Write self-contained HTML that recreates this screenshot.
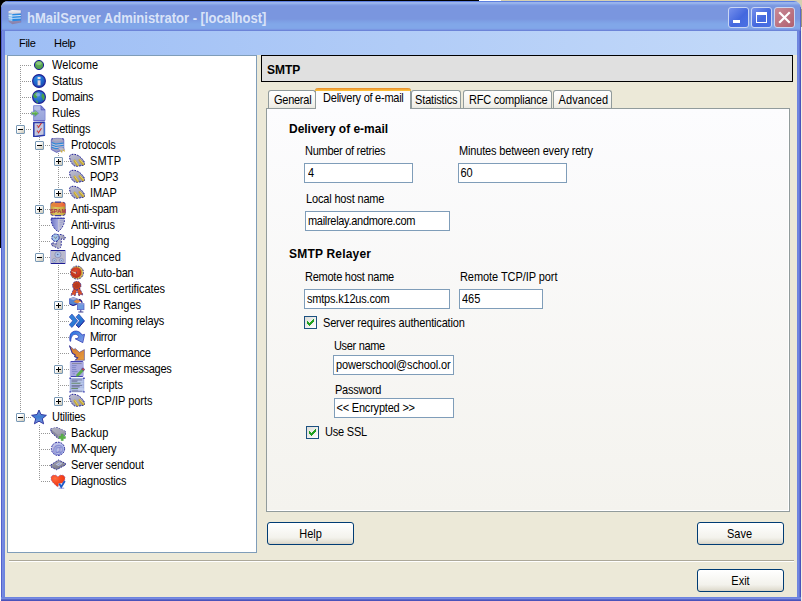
<!DOCTYPE html>
<html lang="en"><head><meta charset="utf-8"><title>hMailServer Administrator - [localhost]</title>
<style>
html,body{margin:0;padding:0}
body{width:802px;height:601px;overflow:hidden;position:relative;background:#000;font:11px "Liberation Sans",sans-serif;color:#000}
div,span,i,svg{position:absolute;box-sizing:border-box;display:block}
#win{left:1px;top:1px;width:800px;height:600px;background:#ece9d8;border-radius:7px 7px 0 0;overflow:hidden}
#tb{left:0;top:0;width:800px;height:30px;background:linear-gradient(to bottom,#5c7fe0 0px,#5c7fe0 1px,#9ab4ec 1px,#9ab4ec 2px,#96b1eb 2px,#96b1eb 3px,#86a4e7 3px,#86a4e7 4px,#7d9ae2 4px,#7d9ae2 5px,#7a96df 5px,#7a96df 18px,#7d9ee4 20px,#81a7e9 23px,#81a7e9 27px,#80a4e8 27px,#80a4e8 28px,#7b98e3 28px,#7b98e3 29px,#6c84d8 29px,#6c84d8 30px)}
#bl{left:0;top:30px;width:4px;height:570px;background:linear-gradient(to right,#5262ca 0,#5262ca 1px,#7a8ce2 1px,#7a8ce2 2px,#7088e0 2px,#7088e0 3px,#6c84e0 3px)}
#br{left:796px;top:30px;width:4px;height:570px;background:linear-gradient(to left,#4a52ba 0,#4a52ba 1px,#6272d2 1px,#6272d2 2px,#7088e0 2px,#7088e0 3px,#6f84de 3px)}
#bb{left:0;top:596px;width:800px;height:4px;background:linear-gradient(to bottom,#6c84e0 0,#6c84e0 1px,#7a8ce0 1px,#7a8ce0 2px,#5a68c8 2px,#5a68c8 3px,#4a52ba 3px)}
#title{left:26px;top:2px;height:30px;font:bold 13px/30px "Liberation Sans",sans-serif;color:#d9e3f8;white-space:pre;letter-spacing:0;transform:scaleY(1.16);transform-origin:0 50%}
#menu{left:4px;top:30px;width:792px;height:24px;background:linear-gradient(to right,#9ebef5,#c4daf9)}
#menu span{top:0;line-height:24px;height:24px;white-space:pre;letter-spacing:-.3px}
.cb{width:21px;height:21px;top:6px;border-radius:3px;border:1px solid #c9d6f3}
#treebox{left:7px;top:55px;width:250px;height:498px;background:#fff;border:1px solid #7f9db9}
.tt{height:16px;line-height:16px;white-space:pre}
.ic{width:16px;height:16px}
.ic svg{left:0;top:0}
.ex{width:9px;height:9px;border:1px solid #7898b5;background:linear-gradient(135deg,#fff 30%,#c9c5b4);border-radius:1px}
.ex i.h{left:1px;top:3px;width:5px;height:1px;background:#000}
.ex i.v{left:3px;top:1px;width:1px;height:5px;background:#000}
svg.tl{left:7px;top:55px}
svg.tl line{stroke:#969696;stroke-width:1;stroke-dasharray:1 1;shape-rendering:crispEdges}
#hdr{left:261px;top:55px;width:532px;height:27px;background:#e0e0e0;border:1px solid #000}
#hdr span{left:5px;top:1px;line-height:25px;font:bold 12px/26px "Liberation Sans",sans-serif;white-space:pre}
.tab{top:90px;height:19px;border:1px solid #919b9c;border-bottom:none;border-radius:3px 3px 0 0;background:linear-gradient(to bottom,#fff,#f1f0ea 80%,#e6e5dc);line-height:19px;text-align:left;white-space:pre}
.tab.sel{top:88px;height:21px;background:#fcfcfe;border-top:none;z-index:3;line-height:21px}
.tab.sel:before{content:"";position:absolute;left:-1px;right:-1px;top:0;height:3px;border-radius:3px 3px 0 0;background:linear-gradient(to bottom,#e68b2c,#ffc73c)}
#panel{left:266px;top:108px;width:524px;height:404px;border:1px solid #919b9c;background:linear-gradient(to bottom,#fcfcfe,#f4f3ee);box-shadow:inset -1px -1px 0 #fff}
.lb{height:14px;line-height:14px;white-space:pre}
.hd{height:16px;line-height:16px;font:bold 12px/16px "Liberation Sans",sans-serif;white-space:pre}
.in{height:20px;border:1px solid #7f9db9;background:#fff;line-height:18px;padding-left:3px;white-space:pre;overflow:hidden}
.ck{width:13px;height:13px;border:1px solid #1c5180;background:linear-gradient(135deg,#dcdcd7,#fff)}
.ck svg{left:0;top:0}
.btn{height:23px;border:1px solid #003c74;border-radius:3px;background:linear-gradient(to bottom,#fff,#f3f2ec 70%,#e2dfd3 92%,#d6d0c5);line-height:22px;text-align:center}
.sep{left:9px;height:1px}
#tree{left:0;top:0;width:0;height:0}
.tt,.lb{transform:scaleY(1.125);transform-origin:0 calc(50% + 3.800px)}
span.t{position:relative;display:inline-block;transform:scaleY(1.125);transform-origin:0 calc(50% + 3.800px)}

</style></head>
<body>
<div style="left:479px;top:0;width:22px;height:1px;background:#fff"></div><div style="left:501px;top:0;width:301px;height:9px;background:#d6cfb0"></div><div style="left:801px;top:9px;width:1px;height:18px;background:#9c9678"></div><div style="left:801px;top:27px;width:1px;height:574px;background:#f4f0e2"></div><div style="left:0;top:248px;width:1px;height:353px;background:#fff"></div>
<div id="win">
<div id="tb"></div>
<div id="bl"></div><div id="br"></div><i style="left:0;top:6px;width:1px;height:24px;background:#6176d6"></i><i style="left:799px;top:6px;width:1px;height:24px;background:#5a68cc"></i><div id="bb"></div>
<svg id="appic" width="16" height="16" viewBox="0 0 16 16" style="left:6px;top:8px"><defs><linearGradient id="ta" x1="0" y1="0" x2="0" y2="1"><stop offset="0" stop-color="#f6f6fa"/><stop offset="1" stop-color="#cfcedb"/></linearGradient><linearGradient id="tb2" x1="0" y1="0" x2="0" y2="1"><stop offset="0" stop-color="#b2aace"/><stop offset="1" stop-color="#8880aa"/></linearGradient></defs><path d="M1.600 2.300L5 .900l9 .500V13.400L5.400 15.200 1.600 12.800z" fill="url(#tb2)"/><path d="M1.600 2.300L5 .900l9 .500V4.600L5.400 5 1.600 4.300z" fill="url(#ta)"/><path d="M1.600 4.300L5.400 5 14 4.600V11.600L5.400 12.200 1.600 11.300z" fill="#2a8ae2"/><path d="M5.400 6.500L14 6.100v.900L5.400 7.400zM5.400 8.900L14 8.500v.900L5.400 9.800z" fill="#dde6f8"/><path d="M1.600 4.300L5.400 5v7.200l-3.800-.900z" fill="#fff" opacity=".5"/><path d="M1.600 5.800l3.800.700v.900l-3.800-.700zM1.600 8.200l3.800.700v.900l-3.800-.700z" fill="#f4f8ff" opacity=".8"/><path d="M14 1.400v12" stroke="#6a7ac8" stroke-width=".6" opacity=".7"/></svg>
<div id="title">hMailServer Administrator - [localhost]</div>
<div class="cb" style="left:727px;background:linear-gradient(135deg,#7690ec,#4468de 55%,#4a72e4)"><i style="left:4px;top:12px;width:7px;height:3px;background:#fff"></i></div>
<div class="cb" style="left:750px;background:linear-gradient(135deg,#7690ec,#4468de 55%,#4a72e4)"><i style="left:4px;top:4px;width:11px;height:11px;border:1px solid #fff;border-top-width:3px"></i></div>
<div class="cb" style="left:773px;background:linear-gradient(135deg,#c98a96,#b06070)"><svg width="19" height="19" viewBox="0 0 19 19" style="left:0;top:0"><path d="M5 5L14 14M14 5L5 14" stroke="#fff" stroke-width="2.2" stroke-linecap="square"/></svg></div>
<div id="menu"><span style="left:14px">File</span><span style="left:49px">Help</span></div>
</div>
<div id="treebox"></div>
<div id="tree">
<svg class="tl" width="250" height="498" viewBox="7 55 250 498" ><line x1="20.5" y1="65" x2="20.5" y2="417"/><line x1="39.5" y1="137" x2="39.5" y2="257"/><line x1="58.5" y1="153" x2="58.5" y2="193"/><line x1="58.5" y1="265" x2="58.5" y2="401"/><line x1="39.5" y1="425" x2="39.5" y2="481"/><line x1="22" y1="65.5" x2="31" y2="65.5"/><line x1="22" y1="81.5" x2="31" y2="81.5"/><line x1="22" y1="97.5" x2="31" y2="97.5"/><line x1="22" y1="113.5" x2="31" y2="113.5"/><line x1="26" y1="129.5" x2="31" y2="129.5"/><line x1="45" y1="145.5" x2="50" y2="145.5"/><line x1="64" y1="161.5" x2="69" y2="161.5"/><line x1="60" y1="177.5" x2="69" y2="177.5"/><line x1="64" y1="193.5" x2="69" y2="193.5"/><line x1="45" y1="209.5" x2="50" y2="209.5"/><line x1="41" y1="225.5" x2="50" y2="225.5"/><line x1="41" y1="241.5" x2="50" y2="241.5"/><line x1="45" y1="257.5" x2="50" y2="257.5"/><line x1="60" y1="273.5" x2="69" y2="273.5"/><line x1="60" y1="289.5" x2="69" y2="289.5"/><line x1="64" y1="305.5" x2="69" y2="305.5"/><line x1="60" y1="321.5" x2="69" y2="321.5"/><line x1="60" y1="337.5" x2="69" y2="337.5"/><line x1="60" y1="353.5" x2="69" y2="353.5"/><line x1="64" y1="369.5" x2="69" y2="369.5"/><line x1="60" y1="385.5" x2="69" y2="385.5"/><line x1="64" y1="401.5" x2="69" y2="401.5"/><line x1="26" y1="417.5" x2="31" y2="417.5"/><line x1="41" y1="433.5" x2="50" y2="433.5"/><line x1="41" y1="449.5" x2="50" y2="449.5"/><line x1="41" y1="465.5" x2="50" y2="465.5"/><line x1="41" y1="481.5" x2="50" y2="481.5"/></svg>
<div class="ic" style="left:31px;top:57px"><svg width="16" height="16" viewBox="0 0 16 16"><defs><radialGradient id="gw" cx=".5" cy=".4" r=".7"><stop offset="0" stop-color="#6ab45e"/><stop offset="1" stop-color="#3f8f3f"/></radialGradient></defs><circle cx="8" cy="8" r="4.600" fill="url(#gw)" stroke="#1e1e94" stroke-width="1"/><ellipse cx="8" cy="6.300" rx="2.900" ry="1.700" fill="#98cc88" opacity=".75"/></svg></div><div class="tt" style="left:52px;top:57px;letter-spacing:0.06px">Welcome</div>
<div class="ic" style="left:31px;top:73px"><svg width="16" height="16" viewBox="0 0 16 16"><defs><radialGradient id="gs" cx=".4" cy=".3" r=".8"><stop offset="0" stop-color="#2a8ee4"/><stop offset=".55" stop-color="#1e62c8"/><stop offset="1" stop-color="#1a3aa0"/></radialGradient></defs><circle cx="8" cy="8" r="6.400" fill="url(#gs)" stroke="#1e1e94" stroke-width="1.100"/><rect x="6.600" y="3.900" width="2.900" height="2.200" fill="#ecdfe6"/><rect x="6.600" y="7.300" width="2.900" height="5" fill="#e6d6da"/></svg></div><div class="tt" style="left:52px;top:73px;letter-spacing:-0.09px">Status</div>
<div class="ic" style="left:31px;top:89px"><svg width="16" height="16" viewBox="0 0 16 16"><defs><radialGradient id="gd" cx=".42" cy=".35" r=".8"><stop offset="0" stop-color="#4a8ee0"/><stop offset=".6" stop-color="#1e68c4"/><stop offset="1" stop-color="#163c98"/></radialGradient></defs><circle cx="8" cy="8" r="6.400" fill="url(#gd)" stroke="#1e1e94" stroke-width="1.100"/><path d="M2.300 6l1.500-2 2-.8.900 1.200-1.200 1 1 1.600-1.200 2.200-1.800-.4-1.200-1.400zM4.600 11.400l1.600.2 1 1.800-1 .6zM11.400 4.600l1.600 1 .8 2.600-.6 2.600-1.200.8-.6-2.400-1-1.600.4-2z" fill="#4aa246"/><ellipse cx="6.800" cy="5.600" rx="2.400" ry="1.900" fill="#a4bef2" opacity=".6"/></svg></div><div class="tt" style="left:52px;top:89px;letter-spacing:-0.3px">Domains</div>
<div class="ic" style="left:31px;top:105px"><svg width="16" height="16" viewBox="0 0 16 16"><defs><linearGradient id="gr" x1="0" y1="0" x2="0" y2="1"><stop offset="0" stop-color="#aab4e2"/><stop offset="1" stop-color="#98a4da"/></linearGradient></defs><path d="M2.600.700h7.400l4 4.200v10.600h-11.400z" fill="url(#gr)" stroke="#868ed8" stroke-width="1"/><path d="M3.400 1.400h6.400v3.600h-6.400z" fill="#b6bfe6"/><path d="M10 .700v4.200h4z" fill="#8088d4" stroke="#4a50c0" stroke-width=".7"/><path d="M2.600 15.500h11.400" stroke="#6a6ad0" stroke-width="1"/><path d="M.400 6.900h3.200V4.900l4.200 3.400-4.200 3.500V9.800H.400z" fill="#5eae4c" stroke="#6c7cd0" stroke-width=".5"/><path d="M1 7.500h3.200V6.400l2.300 1.900" fill="none" stroke="#9ad088" stroke-width=".7"/></svg></div><div class="tt" style="left:52px;top:105px;letter-spacing:-0.03px">Rules</div>
<div class="ex" style="left:16px;top:125px"><i class="h"></i></div><div class="ic" style="left:31px;top:121px"><svg width="16" height="16" viewBox="0 0 16 16"><path d="M2.800 1.600l10.600-.4v13l-10.600 1.600z" fill="#c5c8de" stroke="#2a38aa" stroke-width="1.500" stroke-linejoin="round"/><path d="M13.500 1.400v12.600" stroke="#4a78d8" stroke-width=".9"/><path d="M6 4.200l1.500 2.100 3-4.400M6 9.600l1.500 2.100 3-4.400" fill="none" stroke="#cc3434" stroke-width="1.100"/><rect x="5.600" y="5.400" width="1.400" height="1.400" fill="#a4a8cc"/><rect x="5.600" y="10.800" width="1.400" height="1.400" fill="#a4a8cc"/></svg></div><div class="tt" style="left:52px;top:121px;letter-spacing:-0.18px">Settings</div>
<div class="ex" style="left:35px;top:141px"><i class="h"></i></div><div class="ic" style="left:50px;top:137px"><svg width="16" height="16" viewBox="0 0 16 16"><path d="M1.300 2.800C3 .900 11.500.900 13.800 2.600v9.800L6.600 15.400 1.300 12.600z" fill="#9c9ec4" stroke="#4a4ab8" stroke-width=".7"/><path d="M1.600 2.700C3.500 1 11.500 1 13.500 2.700 11.500 4.800 4 5 1.600 2.700z" fill="#ababc2"/><path d="M1.500 2.200l1.200-.6M12.400 1.600l1.200.7" stroke="#1e1e94" stroke-width="1.100"/><path d="M1.600 5.600l4.200 1.500 7.800-1M1.600 7.900l4.200 1.500 7.800-1M1.600 10.200l4.200 1.500 7.800-1" fill="none" stroke="#2c8ada" stroke-width="1.250"/><path d="M1.600 6.750l4.200 1.500 7.800-1M1.600 9.050l4.200 1.500 7.800-1" fill="none" stroke="#c4c6da" stroke-width=".9"/><path d="M8.200 11.400c1-1.600 4-2 5.400-.6l1 2.200-3.600 1.800z" fill="#b8b8cc" stroke="#6a6ab8" stroke-width=".4"/><path d="M10.600 13.400l1.600 2M12.800 12.600l2 1.800" stroke="#cfb238" stroke-width="1.200"/></svg></div><div class="tt" style="left:71px;top:137px;letter-spacing:-0.14px">Protocols</div>
<div class="ex" style="left:54px;top:157px"><i class="h"></i><i class="v"></i></div><div class="ic" style="left:69px;top:153px"><svg width="16" height="16" viewBox="0 0 16 16"><defs><linearGradient id="gp6" x1="0" y1="0" x2=".6" y2="1"><stop offset="0" stop-color="#c0c0d4"/><stop offset="1" stop-color="#9496ae"/></linearGradient></defs><path d="M.600 3.300C.800 1.800 3 1 5 1.300c2.800.3 5.400 1.500 7.600 4 1.400 1.500 3.400 4.200 3.200 5.600-.3 1.400-2 1.700-3.300 1.500-1 .5-4.400 1.200-6.700.6C3 12 .300 6.400.600 3.300z" fill="url(#gp6)" stroke="#1e1e94" stroke-width="1" stroke-dasharray="1.700 1.100"/><path d="M5.700 7.800l3 4.300M10.700 7.200l3.600 3.900" stroke="#c4a634" stroke-width="2.300" stroke-linecap="round"/><path d="M5.900 7.400l2.900 4.100M11 6.900l3.300 3.600" stroke="#ecd874" stroke-width=".8" stroke-linecap="round"/></svg></div><div class="tt" style="left:90px;top:153px;letter-spacing:0.15px">SMTP</div>
<div class="ic" style="left:69px;top:169px"><svg width="16" height="16" viewBox="0 0 16 16"><defs><linearGradient id="gp7" x1="0" y1="0" x2=".6" y2="1"><stop offset="0" stop-color="#c0c0d4"/><stop offset="1" stop-color="#9496ae"/></linearGradient></defs><path d="M.600 3.300C.800 1.800 3 1 5 1.300c2.800.3 5.400 1.500 7.600 4 1.400 1.500 3.400 4.200 3.200 5.600-.3 1.400-2 1.700-3.300 1.500-1 .5-4.400 1.200-6.700.6C3 12 .300 6.400.600 3.300z" fill="url(#gp7)" stroke="#1e1e94" stroke-width="1" stroke-dasharray="1.700 1.100"/><path d="M5.700 7.800l3 4.300M10.700 7.200l3.600 3.900" stroke="#c4a634" stroke-width="2.300" stroke-linecap="round"/><path d="M5.900 7.400l2.900 4.100M11 6.900l3.300 3.600" stroke="#ecd874" stroke-width=".8" stroke-linecap="round"/></svg></div><div class="tt" style="left:90px;top:169px;letter-spacing:-0.29px">POP3</div>
<div class="ex" style="left:54px;top:189px"><i class="h"></i><i class="v"></i></div><div class="ic" style="left:69px;top:185px"><svg width="16" height="16" viewBox="0 0 16 16"><defs><linearGradient id="gp8" x1="0" y1="0" x2=".6" y2="1"><stop offset="0" stop-color="#c0c0d4"/><stop offset="1" stop-color="#9496ae"/></linearGradient></defs><path d="M.600 3.300C.800 1.800 3 1 5 1.300c2.800.3 5.400 1.500 7.600 4 1.400 1.500 3.400 4.200 3.200 5.600-.3 1.400-2 1.700-3.300 1.500-1 .5-4.400 1.200-6.700.6C3 12 .300 6.400.600 3.300z" fill="url(#gp8)" stroke="#1e1e94" stroke-width="1" stroke-dasharray="1.700 1.100"/><path d="M5.700 7.800l3 4.300M10.700 7.200l3.600 3.900" stroke="#c4a634" stroke-width="2.300" stroke-linecap="round"/><path d="M5.900 7.400l2.900 4.100M11 6.900l3.300 3.600" stroke="#ecd874" stroke-width=".8" stroke-linecap="round"/></svg></div><div class="tt" style="left:90px;top:185px;letter-spacing:-0.05px">IMAP</div>
<div class="ex" style="left:35px;top:205px"><i class="h"></i><i class="v"></i></div><div class="ic" style="left:50px;top:201px"><svg width="16" height="16" viewBox="0 0 16 16"><defs><linearGradient id="gsp" x1="0" y1="0" x2="1" y2="0"><stop offset="0" stop-color="#c49a34"/><stop offset=".35" stop-color="#dcc664"/><stop offset=".8" stop-color="#ccb044"/><stop offset="1" stop-color="#b08a30"/></linearGradient><linearGradient id="gsq" x1="0" y1="0" x2="1" y2="0"><stop offset="0" stop-color="#e0863c"/><stop offset=".7" stop-color="#ec7a40"/><stop offset="1" stop-color="#ea5a38"/></linearGradient></defs><rect x=".500" y="1.300" width="15" height="13.200" rx="2.200" ry="1.800" fill="url(#gsp)" stroke="#7a74b8" stroke-width=".5"/><path d="M1 5.200V3.200c0-1 1-1.600 2-1.600h10c1 0 2 .6 2 1.600v2c-4 1-10 1-14 0z" fill="url(#gsq)"/><path d="M5 1.100h6M5 14.700h6M1.400 2.200l1.200-.8M13.400 1.400l1.200.8M1.400 13.600l1.200.8M13.400 14.400l1.200-.8" stroke="#1e1e94" stroke-width="1"/><text x="8.100" y="12.200" text-anchor="middle" font-family="Liberation Sans,sans-serif" font-weight="bold" font-size="5.600" fill="#a22a4c" letter-spacing=".1">SPAM</text></svg></div><div class="tt" style="left:71px;top:201px;letter-spacing:-0.32px">Anti-spam</div>
<div class="ic" style="left:50px;top:217px"><svg width="16" height="16" viewBox="0 0 16 16"><defs><linearGradient id="gsh" x1="0" y1="0" x2="1" y2="0"><stop offset="0" stop-color="#6c74c6"/><stop offset=".5" stop-color="#a6aade"/><stop offset=".54" stop-color="#c4c4da"/><stop offset="1" stop-color="#b0b2d2"/></linearGradient></defs><path d="M1.200 1.300h13.200c.2 2.400-.2 4.600-.8 6.200-1.200 3-3.200 5.600-5.600 7.200-2.600-1.800-4.600-4.400-5.800-7.200-.7-1.700-1.200-3.800-1-6.200z" fill="url(#gsh)" stroke="#1e1e94" stroke-width=".9" stroke-dasharray="1.800 1.200"/><path d="M1.200 1.300h13.200" stroke="#3c44b0" stroke-width="1.200"/><path d="M9.600 3.600h3.600M9.600 5.400h3.200M9.600 7.200h2.600M9.400 9h1.800" stroke="#9a9ec8" stroke-width=".8"/></svg></div><div class="tt" style="left:71px;top:217px;letter-spacing:-0.2px">Anti-virus</div>
<div class="ic" style="left:50px;top:233px"><svg width="16" height="16" viewBox="0 0 16 16"><defs><linearGradient id="glg" x1="0" y1="0" x2="1" y2="0"><stop offset="0" stop-color="#9c9cb6"/><stop offset=".6" stop-color="#b8b8cc"/><stop offset="1" stop-color="#8a8aa8"/></linearGradient></defs><path d="M7 2.200c2.400-1.200 5-.8 6.600.2l2 2.600-1.400 1.600-2.800-.8-.2 7c-.2 1.800-1.400 2.800-2.800 2.800L1.400 12.200l.8-2.800 4 1.800z" fill="url(#glg)" stroke="#1e1e94" stroke-width=".9" stroke-dasharray="1.700 1.200"/><circle cx="5.500" cy="4.700" r="3.700" fill="#a2c6ea" stroke="#1e1e94" stroke-width=".9" stroke-dasharray="2.200 .8"/><path d="M4 3.400l1.600 2.200 1.500-2.200" fill="none" stroke="#808090" stroke-width="1"/></svg></div><div class="tt" style="left:71px;top:233px;letter-spacing:-0.11px">Logging</div>
<div class="ex" style="left:35px;top:253px"><i class="h"></i></div><div class="ic" style="left:50px;top:249px"><svg width="16" height="16" viewBox="0 0 16 16"><rect x=".400" y="1.400" width="15.400" height="13.200" fill="#b9b9cd" stroke="#b0b0ea" stroke-width=".8"/><path d="M1 1.500h14M1 14.500h14" stroke="#1e1e94" stroke-width="1.100"/><circle cx="7.900" cy="5.700" r="3.100" fill="#a8c0e8" stroke="#9090b2" stroke-width=".9"/><circle cx="4.300" cy="11.400" r="2" fill="#a8c0e8" stroke="#9090b2" stroke-width=".8"/><circle cx="11.400" cy="11.400" r="2" fill="#a8c0e8" stroke="#9090b2" stroke-width=".8"/><circle cx="7.700" cy="5.500" r=".8" fill="#5a6a9c"/><circle cx="4.300" cy="11.400" r=".5" fill="#6a7090"/><circle cx="11.400" cy="11.400" r=".5" fill="#6a7090"/></svg></div><div class="tt" style="left:71px;top:249px;letter-spacing:0.15px">Advanced</div>
<div class="ic" style="left:69px;top:265px"><svg width="16" height="16" viewBox="0 0 16 16"><defs><radialGradient id="gab" cx=".5" cy=".35" r=".7"><stop offset="0" stop-color="#e04c30"/><stop offset="1" stop-color="#b42a18"/></radialGradient></defs><circle cx="8" cy="7.600" r="6.500" fill="#c4a238" stroke="#1e1e94" stroke-width=".9" stroke-dasharray="1.800 1"/><circle cx="8" cy="7.600" r="5.700" fill="none" stroke="#f4ecc8" stroke-width=".9" stroke-dasharray=".9 1.300"/><circle cx="7" cy="7.600" r="5.300" fill="url(#gab)"/><path d="M2 6l5.200 1.400-.6 1.600z" fill="#eac8b0"/><path d="M7.400 6.400l.2 2.400" stroke="#5a3a70" stroke-width=".6"/></svg></div><div class="tt" style="left:90px;top:265px;letter-spacing:-0.13px">Auto-ban</div>
<div class="ic" style="left:69px;top:281px"><svg width="16" height="16" viewBox="0 0 16 16"><path d="M5 7L1.800 14.400l2.600-.8L6 15.200l2-6zM10.500 7l3.600 7-2.600-.6L10 15.200l-2-6z" fill="#d8502a" stroke="#1e1e94" stroke-width=".7" stroke-dasharray="1.500 1.200"/><circle cx="7.750" cy="4.500" r="4.200" fill="#c8421f" stroke="#1e1e94" stroke-width=".8" stroke-dasharray="1.500 1.100"/><circle cx="7.750" cy="4.500" r="2.500" fill="#b43a22"/></svg></div><div class="tt" style="left:90px;top:281px;letter-spacing:-0.07px">SSL certificates</div>
<div class="ex" style="left:54px;top:301px"><i class="h"></i><i class="v"></i></div><div class="ic" style="left:69px;top:297px"><svg width="16" height="16" viewBox="0 0 16 16"><path d="M.300 1.800L4.400.600l4 1.200v5.400L4 8.600.300 7z" fill="#5484d2" stroke="#3c46b4" stroke-width=".6"/><path d="M.300 1.800L4.400.600l4 1.200-4 1.300z" fill="#aab0d4"/><path d="M1 7.200l3 1.300 3.600-1.200" fill="none" stroke="#1e1e94" stroke-width="1"/><path d="M4.800 4.800L7.600 2.400l1.200.8 2.600-1 1.600 2.600-2.800.2-1.400 1.600z" fill="#e88c3e" stroke="#c46a30" stroke-width=".3"/><path d="M9.600 2.400c2 .4 3.200 1.600 3.600 3.400" fill="none" stroke="#1e1e94" stroke-width="1.100"/><rect x="8.400" y="6.700" width="6.600" height="6" fill="#6c9ae0" stroke="#5058c0" stroke-width=".7"/><path d="M8.400 7h6.600" stroke="#a0a8dc" stroke-width=".8"/><path d="M9.400 15h5M11.800 12.800V15" stroke="#3a3a8c" stroke-width="1"/></svg></div><div class="tt" style="left:90px;top:297px;letter-spacing:-0.02px">IP Ranges</div>
<div class="ic" style="left:69px;top:313px"><svg width="16" height="16" viewBox="0 0 16 16"><defs><linearGradient id="grl" x1="0" y1="0" x2="1" y2="1"><stop offset="0" stop-color="#3a86dc"/><stop offset=".5" stop-color="#2a7ad4"/><stop offset="1" stop-color="#2058c0"/></linearGradient></defs><path d="M.200 3.900L3 1.100l5.700 6.700L3 14.500.200 11.800l3.500-4zM7 3.900l2.800-2.800 5.700 6.700-5.700 6.700L7 11.800l3.500-4z" fill="url(#grl)" stroke="#2434a8" stroke-width=".6"/><path d="M7 11.800l2.800 2.700 5.700-6.700" fill="none" stroke="#1e1e94" stroke-width=".9"/></svg></div><div class="tt" style="left:90px;top:313px;letter-spacing:-0.2px">Incoming relays</div>
<div class="ic" style="left:69px;top:329px"><svg width="16" height="16" viewBox="0 0 16 16"><defs><linearGradient id="gm" x1="0" y1="0" x2="1" y2=".6"><stop offset="0" stop-color="#1c70e4"/><stop offset=".5" stop-color="#4a84e0"/><stop offset="1" stop-color="#7a98e4"/></linearGradient></defs><path d="M1 12.200C.300 8 1 4.600 3.400 3 6 1.400 9.400 1.800 11.600 4l1.400 2 2.600-.700-1.800 8.400-7.600-3.900 2.800-.600.600-1.800C8.400 5.600 6.600 4.800 4.800 5.600 2.700 6.800 1.800 9 1.700 12.200z" fill="url(#gm)" stroke="#2430b0" stroke-width=".7" stroke-linejoin="round"/></svg></div><div class="tt" style="left:90px;top:329px;letter-spacing:-0.39px">Mirror</div>
<div class="ic" style="left:69px;top:345px"><svg width="16" height="16" viewBox="0 0 16 16"><defs><linearGradient id="gpf" x1="0" y1="0" x2="1" y2="1"><stop offset="0" stop-color="#d67a2c"/><stop offset=".6" stop-color="#de8a38"/><stop offset="1" stop-color="#e8a03c"/></linearGradient></defs><path d="M.500.700l4.400 3.800 1.300-1.100 4.200 3.900 5-2.700v10.700H6.200l2.600-2.600-3.200-1 .6-2-2.800-1.200z" fill="url(#gpf)" stroke="#303098" stroke-width=".5"/><path d="M.500.700L3.400 8.500l2.800 1.200-.6 2 3.200 1L6.200 15.300" fill="none" stroke="#1e1e94" stroke-width=".8"/></svg></div><div class="tt" style="left:90px;top:345px;letter-spacing:-0.2px">Performance</div>
<div class="ex" style="left:54px;top:365px"><i class="h"></i><i class="v"></i></div><div class="ic" style="left:69px;top:361px"><svg width="16" height="16" viewBox="0 0 16 16"><rect x="1.300" y=".300" width="13" height="15.300" rx="1" fill="#a9a9e0" stroke="#9a9ae0" stroke-width=".6"/><path d="M1.800.500h12M1.800 15.500h12" stroke="#4444b4" stroke-width="1"/><path d="M3 2.500h9.600" stroke="#8a8aa2" stroke-width="1"/><path d="M3 4.600h4.600M3 6.600h3.800M3 8.600h4.400M3 10.600h5.600M3.600 12.800h2.400" stroke="#7c84c6" stroke-width=".9"/><path d="M12.600 8.200l2 1.600-5 5.200-2.200.6.400-2.200z" fill="#5cb04a" stroke="#4a9a3c" stroke-width=".4"/><path d="M12.600 8.200l1.200-1.400 2 1.600-1.200 1.400z" fill="#d44a3c" stroke="#1e1e94" stroke-width=".5"/></svg></div><div class="tt" style="left:90px;top:361px;letter-spacing:-0.27px">Server messages</div>
<div class="ic" style="left:69px;top:377px"><svg width="16" height="16" viewBox="0 0 16 16"><rect x="1.100" y="1.200" width="13.800" height="13.700" fill="#a9b9e2" stroke="#8c9cd8" stroke-width=".6"/><path d="M2.600 3h10.400M2.600 4.200h5.600M2.600 8.600h10.400M2.600 9.800h8M3 14h10" stroke="#74749c" stroke-width="1"/><path d="M2.400 6.300h9.400M2.400 11.500h6.800" stroke="#6a8a6c" stroke-width="1.100"/><path d="M9 4.200h5.400M11.400 6.400h3M11 9.800h3.400M9.400 11.600h5v1.600h-5z" stroke="#c4d0f0" stroke-width="1" fill="#c4d0f0" opacity=".8"/><path d="M1.100 1.200h.1M14.900 1.200h.1M1.100 14.900h.1M14.900 14.900h.1" stroke="#3a3ab0" stroke-width="1.400" stroke-linecap="square"/></svg></div><div class="tt" style="left:90px;top:377px;letter-spacing:-0.1px">Scripts</div>
<div class="ex" style="left:54px;top:397px"><i class="h"></i><i class="v"></i></div><div class="ic" style="left:69px;top:393px"><svg width="16" height="16" viewBox="0 0 16 16"><defs><linearGradient id="gp21" x1="0" y1="0" x2=".6" y2="1"><stop offset="0" stop-color="#c0c0d4"/><stop offset="1" stop-color="#9496ae"/></linearGradient></defs><path d="M.600 3.300C.800 1.800 3 1 5 1.300c2.800.3 5.400 1.500 7.600 4 1.400 1.500 3.400 4.200 3.200 5.600-.3 1.400-2 1.700-3.300 1.500-1 .5-4.400 1.200-6.700.6C3 12 .300 6.400.600 3.300z" fill="url(#gp21)" stroke="#1e1e94" stroke-width="1" stroke-dasharray="1.700 1.100"/><path d="M5.700 7.800l3 4.300M10.700 7.200l3.600 3.900" stroke="#c4a634" stroke-width="2.300" stroke-linecap="round"/><path d="M5.900 7.400l2.900 4.100M11 6.900l3.300 3.600" stroke="#ecd874" stroke-width=".8" stroke-linecap="round"/></svg></div><div class="tt" style="left:90px;top:393px;letter-spacing:-0.02px">TCP/IP ports</div>
<div class="ex" style="left:16px;top:413px"><i class="h"></i></div><div class="ic" style="left:31px;top:409px"><svg width="16" height="16" viewBox="0 0 16 16"><defs><linearGradient id="gst" x1="0" y1="0" x2="0" y2="1"><stop offset="0" stop-color="#7a90d6"/><stop offset=".5" stop-color="#3e7cd2"/><stop offset="1" stop-color="#7c94dc"/></linearGradient></defs><path d="M8 1l2 4.500 5.400.8-4.100 3.400 1.300 5.100L8 12.200l-4.600 2.600 1.300-5.100L.600 6.300 6 5.500z" fill="url(#gst)" stroke="#262c9c" stroke-width=".9" stroke-linejoin="round"/></svg></div><div class="tt" style="left:52px;top:409px;letter-spacing:-0.24px">Utilities</div>
<div class="ic" style="left:50px;top:425px"><svg width="16" height="16" viewBox="0 0 16 16"><defs><linearGradient id="gbk" x1="0" y1="0" x2="1" y2="1"><stop offset="0" stop-color="#b4b4c4"/><stop offset="1" stop-color="#9a9aac"/></linearGradient></defs><path d="M.500 4L7 2.500l8.500 4V10L8 13.500 1.500 7.500z" fill="#8a8a9c" stroke="#1e1e94" stroke-width=".9" stroke-dasharray="1.800 1.100"/><path d="M.500 4L7 2.500l8.500 4L8 10z" fill="url(#gbk)"/><path d="M8 10l7.500-3.500V10L8 13.500z" fill="#9c9cac"/><path d="M11.200 9.200h2v2.200h2.200v2h-2.200v2.200h-2v-2.200H9v-2h2.200z" fill="#5cb446" stroke="#3c9a34" stroke-width=".5"/></svg></div><div class="tt" style="left:71px;top:425px;letter-spacing:0.16px">Backup</div>
<div class="ic" style="left:50px;top:441px"><svg width="16" height="16" viewBox="0 0 16 16"><circle cx="8" cy="7.800" r="6.600" fill="#bcc0ea" stroke="#1e1e94" stroke-width="1" stroke-dasharray="1.800 1"/><text x="8" y="11.600" text-anchor="middle" font-family="Liberation Sans,sans-serif" font-size="11.500" fill="#d6daf4" stroke="#7a82cc" stroke-width=".55">@</text></svg></div><div class="tt" style="left:71px;top:441px;letter-spacing:-0.31px">MX-query</div>
<div class="ic" style="left:50px;top:457px"><svg width="16" height="16" viewBox="0 0 16 16"><defs><linearGradient id="gso" x1="0" y1="0" x2=".4" y2="1"><stop offset="0" stop-color="#a8a8b8"/><stop offset="1" stop-color="#787888"/></linearGradient></defs><path d="M.700 8L8.500 3l7.200 3.500-.2 1.500-9 4.700L1 10z" fill="url(#gso)" stroke="#1e1e94" stroke-width=".9" stroke-dasharray="1.700 1.100"/><path d="M5.600 7.600L9.400 5.200l3 1.400L8.600 9z" fill="#bcc2de"/><path d="M7.400 7.400l2.200-1.200 1.200.6-2.200 1.200z" fill="#8a94cc"/></svg></div><div class="tt" style="left:71px;top:457px;letter-spacing:-0.12px">Server sendout</div>
<div class="ic" style="left:50px;top:473px"><svg width="16" height="16" viewBox="0 0 16 16"><defs><radialGradient id="gdg" cx=".3" cy=".3" r=".8"><stop offset="0" stop-color="#ff6c40"/><stop offset=".5" stop-color="#f84820"/><stop offset="1" stop-color="#ec3410"/></radialGradient></defs><path d="M7.600 13.700C4 10.800 1 8.200 1 5.200 1 2.800 2.800 2 4.400 2c1.500 0 2.700.8 3.500 1.900C8.700 2.800 10 2 11.500 2 13.200 2 15 2.800 15 5.200c0 3-3.400 5.600-7.400 8.500z" fill="url(#gdg)" stroke="#6a3aa0" stroke-width=".5" stroke-dasharray="1.600 1.200"/><path d="M8.600 10.400h5.600v4.800H8.600z" fill="#fff"/><path d="M8.600 15.200h5.600" stroke="#6a6ad0" stroke-width=".7"/><path d="M9.200 10.600l2 3.400 3.600-6" fill="none" stroke="#1e5aca" stroke-width="1.900"/></svg></div><div class="tt" style="left:71px;top:473px;letter-spacing:-0.14px">Diagnostics</div>
</div>
<div id="hdr"><span>SMTP</span></div>
<div class="tab" style="left:268px;width:48px;padding-left:5.0px;letter-spacing:-0.26px"><span class="t">General</span></div>
<div class="tab sel" style="left:315px;width:96px;padding-left:7.1px;letter-spacing:-0.25px"><span class="t">Delivery of e-mail</span></div>
<div class="tab" style="left:411px;width:50px;padding-left:3.1px;letter-spacing:-0.18px"><span class="t">Statistics</span></div>
<div class="tab" style="left:463px;width:89px;padding-left:4.9px;letter-spacing:-0.19px"><span class="t">RFC compliance</span></div>
<div class="tab" style="left:553px;width:59px;padding-left:4.5px;letter-spacing:0.11px"><span class="t">Advanced</span></div>
<div id="panel"></div>
<div class="hd" style="left:289px;top:121px;letter-spacing:-0.02px">Delivery of e-mail</div>
<div class="lb" style="left:305px;top:144px;letter-spacing:-0.28px">Number of retries</div>
<div class="lb" style="left:459px;top:144px;letter-spacing:-0.16px">Minutes between every retry</div>
<div class="in" style="left:304px;top:163px;width:109px;padding-left:3px;letter-spacing:0px"><span class="t">4</span></div>
<div class="in" style="left:458px;top:163px;width:109px;padding-left:1.5px;letter-spacing:0px"><span class="t">60</span></div>
<div class="lb" style="left:306px;top:192px;letter-spacing:-0.16px">Local host name</div>
<div class="in" style="left:305px;top:211px;width:145px;padding-left:2px;letter-spacing:-0.3px"><span class="t">mailrelay.andmore.com</span></div>
<div class="hd" style="left:289px;top:246px;letter-spacing:0.2px">SMTP Relayer</div>
<div class="lb" style="left:305px;top:270px;letter-spacing:-0.25px">Remote host name</div>
<div class="lb" style="left:460px;top:270px;letter-spacing:-0.07px">Remote TCP/IP port</div>
<div class="in" style="left:304px;top:289px;width:146px;padding-left:2px;letter-spacing:-0.2px"><span class="t">smtps.k12us.com</span></div>
<div class="in" style="left:459px;top:289px;width:84px;padding-left:2px;letter-spacing:0px"><span class="t">465</span></div>
<div class="ck" style="left:304px;top:316px"><svg width="11" height="11" viewBox="0 0 11 11" shape-rendering="crispEdges"><path d="M2 4v3h1v1h1v1h1v-1h1v-1h1v-1h1v-1h1v-3h-1v1h-1v1h-1v1h-1v1h-1v-1h-1v-1z" fill="#21a121"/></svg></div>
<div class="lb" style="left:323px;top:316px;letter-spacing:-0.17px">Server requires authentication</div>
<div class="lb" style="left:334px;top:339px;letter-spacing:-0.32px">User name</div>
<div class="in" style="left:333px;top:355px;width:121px;padding-left:2px;letter-spacing:-0.15px"><span class="t">powerschool@school.or</span></div>
<div class="lb" style="left:335px;top:383px;letter-spacing:-0.26px">Password</div>
<div class="in" style="left:334px;top:398px;width:120px;padding-left:1.5px;letter-spacing:-0.2px"><span class="t">&lt;&lt; Encrypted &gt;&gt;</span></div>
<div class="ck" style="left:306px;top:426px"><svg width="11" height="11" viewBox="0 0 11 11" shape-rendering="crispEdges"><path d="M2 4v3h1v1h1v1h1v-1h1v-1h1v-1h1v-1h1v-3h-1v1h-1v1h-1v1h-1v1h-1v-1h-1v-1z" fill="#21a121"/></svg></div>
<div class="lb" style="left:325px;top:425px;letter-spacing:-0.2px">Use SSL</div>
<div class="btn" style="left:267px;top:522px;width:87px"><span class="t">Help</span></div>
<div class="btn" style="left:697px;top:522px;width:87px;padding-right:2px"><span class="t">Save</span></div>
<div class="sep" style="top:560px;width:785px;background:#aca899"></div>
<div class="sep" style="top:561px;width:785px;background:#fff"></div>
<div class="btn" style="left:697px;top:569px;width:87px"><span class="t">Exit</span></div>
</body></html>
